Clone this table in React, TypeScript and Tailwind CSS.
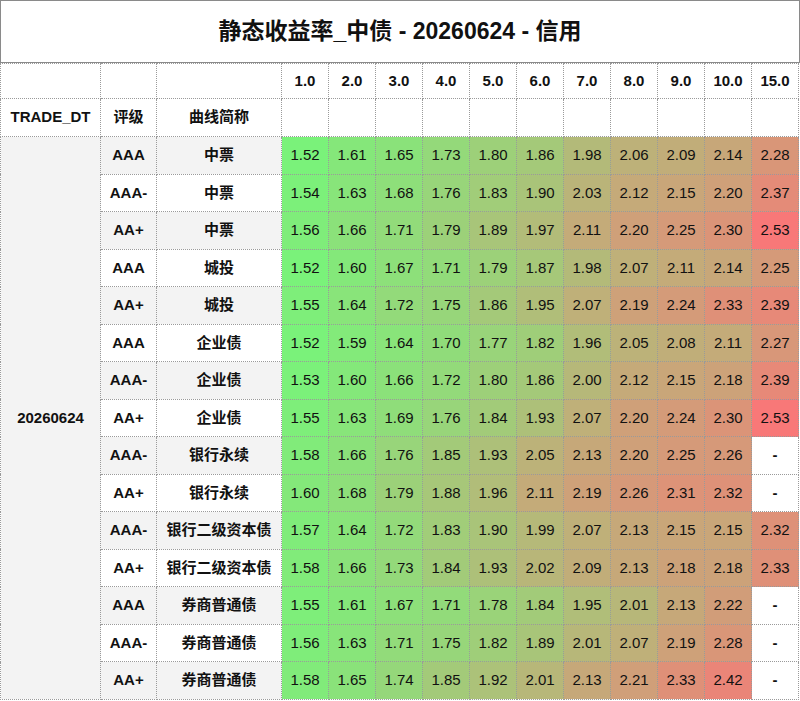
import React from "react";

const tenors = ["1.0", "2.0", "3.0", "4.0", "5.0", "6.0", "7.0", "8.0", "9.0", "10.0", "15.0"];

type Row = { rating: string; name: string; vals: (number | null)[] };

const rows: Row[] = [
  { rating: "AAA", name: "中票", vals: [1.52, 1.61, 1.65, 1.73, 1.8, 1.86, 1.98, 2.06, 2.09, 2.14, 2.28] },
  { rating: "AAA-", name: "中票", vals: [1.54, 1.63, 1.68, 1.76, 1.83, 1.9, 2.03, 2.12, 2.15, 2.2, 2.37] },
  { rating: "AA+", name: "中票", vals: [1.56, 1.66, 1.71, 1.79, 1.89, 1.97, 2.11, 2.2, 2.25, 2.3, 2.53] },
  { rating: "AAA", name: "城投", vals: [1.52, 1.6, 1.67, 1.71, 1.79, 1.87, 1.98, 2.07, 2.11, 2.14, 2.25] },
  { rating: "AA+", name: "城投", vals: [1.55, 1.64, 1.72, 1.75, 1.86, 1.95, 2.07, 2.19, 2.24, 2.33, 2.39] },
  { rating: "AAA", name: "企业债", vals: [1.52, 1.59, 1.64, 1.7, 1.77, 1.82, 1.96, 2.05, 2.08, 2.11, 2.27] },
  { rating: "AAA-", name: "企业债", vals: [1.53, 1.6, 1.66, 1.72, 1.8, 1.86, 2.0, 2.12, 2.15, 2.18, 2.39] },
  { rating: "AA+", name: "企业债", vals: [1.55, 1.63, 1.69, 1.76, 1.84, 1.93, 2.07, 2.2, 2.24, 2.3, 2.53] },
  { rating: "AAA-", name: "银行永续", vals: [1.58, 1.66, 1.76, 1.85, 1.93, 2.05, 2.13, 2.2, 2.25, 2.26, null] },
  { rating: "AA+", name: "银行永续", vals: [1.6, 1.68, 1.79, 1.88, 1.96, 2.11, 2.19, 2.26, 2.31, 2.32, null] },
  { rating: "AAA-", name: "银行二级资本债", vals: [1.57, 1.64, 1.72, 1.83, 1.9, 1.99, 2.07, 2.13, 2.15, 2.15, 2.32] },
  { rating: "AA+", name: "银行二级资本债", vals: [1.58, 1.66, 1.73, 1.84, 1.93, 2.02, 2.09, 2.13, 2.18, 2.18, 2.33] },
  { rating: "AAA", name: "券商普通债", vals: [1.55, 1.61, 1.67, 1.71, 1.78, 1.84, 1.95, 2.01, 2.13, 2.22, null] },
  { rating: "AAA-", name: "券商普通债", vals: [1.56, 1.63, 1.71, 1.75, 1.82, 1.89, 2.01, 2.07, 2.19, 2.28, null] },
  { rating: "AA+", name: "券商普通债", vals: [1.58, 1.65, 1.74, 1.85, 1.92, 2.01, 2.13, 2.21, 2.33, 2.42, null] },
];

const MIN = 1.52;
const MAX = 2.53;

// linear green -> red scale over the whole grid
function heat(v: number) {
  const t = Math.max(0, Math.min(1, (v - MIN) / (MAX - MIN)));
  const lo = [122, 242, 122];
  const hi = [248, 120, 120];
  const c = lo.map((a, i) => Math.round(a + (hi[i] - a) * t));
  return `rgb(${c[0]},${c[1]},${c[2]})`;
}

const cell = "border border-dotted border-[#9a9a9a] text-center p-0";

export default function App() {
  return (
    <div
      className="w-[800px] h-[701px] bg-white text-[#111]"
      style={{ fontFamily: '"Liberation Sans", Arial, "Noto Sans CJK SC", sans-serif' }}
    >
      <div className="h-[63px] border border-[#8a8a8a] flex items-center justify-center">
        <h1 className="text-[23px] font-bold">静态收益率_中债 - 20260624 - 信用</h1>
      </div>
      <table className="table-fixed border-collapse w-[799px] text-[15px]">
        <colgroup>
          <col className="w-[100px]" />
          <col className="w-[56px]" />
          <col className="w-[125px]" />
          {tenors.map((t) => (
            <col key={t} className="w-[47px]" />
          ))}
        </colgroup>
        <thead>
          <tr className="h-[35px] font-bold">
            <th className={cell} />
            <th className={cell} />
            <th className={cell} />
            {tenors.map((t) => (
              <th key={t} className={cell}>
                {t}
              </th>
            ))}
          </tr>
          <tr className="h-[38px] font-bold">
            <th className={cell}>TRADE_DT</th>
            <th className={cell}>评级</th>
            <th className={cell}>曲线简称</th>
            {tenors.map((t) => (
              <th key={t} className={cell} />
            ))}
          </tr>
        </thead>
        <tbody>
          {rows.map((r, i) => {
            const stripe = i % 2 === 0 ? "bg-[#f3f3f3]" : "bg-white";
            return (
              <tr key={i} className="h-[37.5px]">
                {i === 0 && (
                  <td rowSpan={rows.length} className={`${cell} bg-[#f3f3f3] font-bold`}>
                    20260624
                  </td>
                )}
                <td className={`${cell} ${stripe} font-bold`}>{r.rating}</td>
                <td className={`${cell} ${stripe} font-bold`}>{r.name}</td>
                {r.vals.map((v, j) =>
                  v === null ? (
                    <td key={j} className={`${cell} bg-white font-bold`}>
                      -
                    </td>
                  ) : (
                    <td key={j} className={cell} style={{ backgroundColor: heat(v) }}>
                      {v.toFixed(2)}
                    </td>
                  )
                )}
              </tr>
            );
          })}
        </tbody>
      </table>
    </div>
  );
}
